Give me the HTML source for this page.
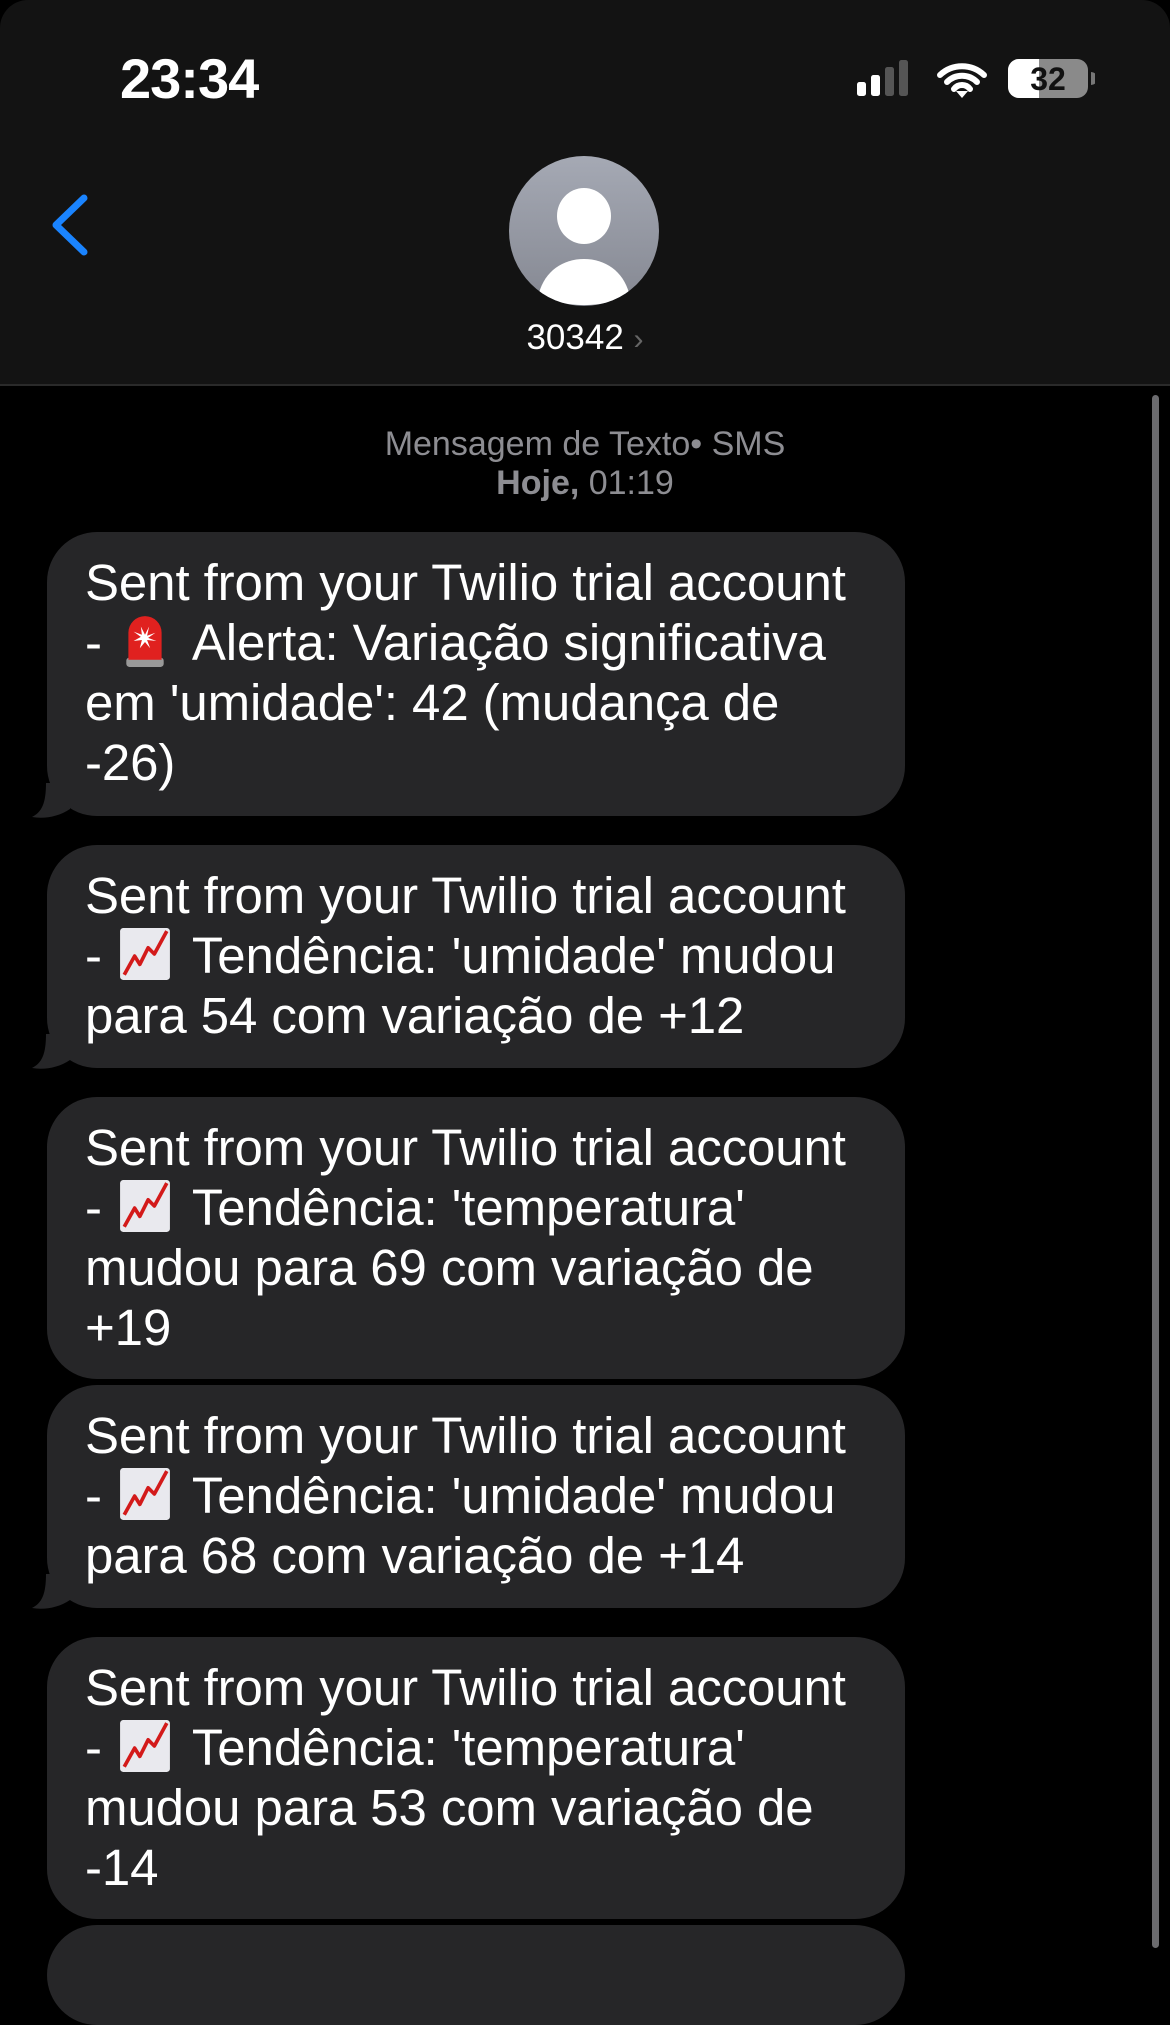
<!DOCTYPE html>
<html><head><meta charset="utf-8"><style>
*{margin:0;padding:0;box-sizing:border-box}
body{width:1170px;height:1948px;background:#000;overflow:hidden;font-family:"Liberation Sans",sans-serif;position:relative;color:#fff}
.hdr{position:absolute;left:0;top:0;width:1170px;height:386px;background:#131313;border-bottom:2px solid #2a2a2a;border-radius:28px 28px 0 0}
.time{position:absolute;left:120px;top:46px;font-size:56px;font-weight:bold;letter-spacing:-1px}
.num{position:absolute;left:0;width:1170px;top:318px;text-align:center;font-size:35px}
.meta{position:absolute;left:0;width:1170px;text-align:center;color:#8d8d92;font-size:34px}
.b{position:absolute;left:47px;width:858px;background:#262628;border-radius:50px;padding:21px 0 0 38px;font-size:51px;line-height:60px;white-space:nowrap;letter-spacing:-0.1px}
.tail{position:absolute;left:30px;width:40px;height:36px}
.emo{display:inline-block;width:54px;height:54px;vertical-align:-8px;margin:0 20px 0 16px}
.sb{position:absolute;left:1152px;top:395px;width:7px;height:1553px;background:#6b6b6e;border-radius:4px}
</style></head><body>
<div class="hdr"></div>
<div class="time">23:34</div>
<svg style="position:absolute;left:855px;top:58px" width="240" height="42" viewBox="0 0 240 42">
<rect x="2" y="24" width="9" height="14" rx="2.5" fill="#fff"/>
<rect x="16" y="17" width="9" height="21" rx="2.5" fill="#fff"/>
<rect x="30" y="9" width="9" height="29" rx="2.5" fill="#555"/>
<rect x="44" y="2" width="9" height="36" rx="2.5" fill="#555"/>
<path d="M85 17a32 32 0 0 1 44 0M92 24a21 21 0 0 1 30 0M99 31a10 10 0 0 1 16 0" stroke="#fff" stroke-width="6" fill="none" stroke-linecap="round"/>
<path d="M101 33l6 7 6-7z" fill="#fff"/>
<rect x="153" y="1" width="80" height="39" rx="11" fill="#8a8a8a"/>
<path d="M164 1h20v39h-20a11 11 0 0 1-11-11v-17a11 11 0 0 1 11-11z" fill="#fff"/>
<text x="193" y="32" text-anchor="middle" font-family="Liberation Sans" font-weight="bold" font-size="32" fill="#111">32</text>
<path d="M236 14a6 6 0 0 1 0 13z" fill="#777"/>
</svg>
<svg style="position:absolute;left:48px;top:193px" width="44" height="64" viewBox="0 0 44 64"><path d="M36 5L8 32l28 27" stroke="#1a84ff" stroke-width="7" fill="none" stroke-linecap="round" stroke-linejoin="round"/></svg>
<svg style="position:absolute;left:509px;top:156px" width="150" height="150" viewBox="0 0 150 150">
<defs><linearGradient id="g" x1="0" y1="0" x2="0" y2="1"><stop offset="0" stop-color="#a5a9b4"/><stop offset="1" stop-color="#858892"/></linearGradient><clipPath id="c"><circle cx="75" cy="75" r="75"/></clipPath></defs>
<circle cx="75" cy="75" r="75" fill="url(#g)"/>
<ellipse cx="75" cy="60" rx="27" ry="28" fill="#fff"/>
<path d="M30 137c6-22 24-34 45-34s39 12 45 34c-12 9-28 12-45 12s-33-3-45-12z" fill="#fff" clip-path="url(#c)"/>
</svg>
<div class="num">30342 <span style="color:#666;font-size:30px">&#x203A;</span></div>
<div class="meta" style="top:425px">Mensagem de Texto• SMS</div>
<div class="meta" style="top:464px"><b>Hoje,</b> 01:19</div>

<svg width="0" height="0" style="position:absolute"><defs>
<symbol id="chart" viewBox="0 0 52 52"><rect x="2" y="1" width="48" height="50" rx="3" fill="#e9e9ee"/><path d="M6 46l10-18 5 8 8-16 6 6 12-22" stroke="#d31a1a" stroke-width="3.5" fill="none" stroke-linejoin="round"/></symbol>
<symbol id="siren" viewBox="0 0 52 52"><rect x="8" y="42" width="36" height="9" rx="3" fill="#999"/><path d="M10 44V18a16 16 0 0 1 32 0v26z" fill="#e0211f"/><path d="M22 12l4 8 4-8-2 9 8-3-7 5 8 3-9-1 3 8-5-6-5 6 2-8-8 1 7-4-7-5 8 3z" fill="#fff"/></symbol>
<symbol id="tl" viewBox="0 0 40 36"><path d="M40 0v26c-12 8-26 10-38 8 10-5 14-14 14-34z" fill="#262628"/></symbol>
</defs></svg>

<div class="b" style="top:532px;height:284px">Sent from your Twilio trial account<br>-<svg class="emo"><use href="#siren"/></svg>Alerta: Variação significativa<br>em 'umidade': 42 (mudança de<br>-26)</div>
<svg class="tail" style="top:783px" viewBox="0 0 40 36"><use href="#tl"/></svg>

<div class="b" style="top:845px;height:223px">Sent from your Twilio trial account<br>-<svg class="emo"><use href="#chart"/></svg>Tendência: 'umidade' mudou<br>para 54 com variação de +12</div>
<svg class="tail" style="top:1034px" viewBox="0 0 40 36"><use href="#tl"/></svg>

<div class="b" style="top:1097px;height:282px">Sent from your Twilio trial account<br>-<svg class="emo"><use href="#chart"/></svg>Tendência: 'temperatura'<br>mudou para 69 com variação de<br>+19</div>

<div class="b" style="top:1385px;height:223px">Sent from your Twilio trial account<br>-<svg class="emo"><use href="#chart"/></svg>Tendência: 'umidade' mudou<br>para 68 com variação de +14</div>
<svg class="tail" style="top:1574px" viewBox="0 0 40 36"><use href="#tl"/></svg>

<div class="b" style="top:1637px;height:282px">Sent from your Twilio trial account<br>-<svg class="emo"><use href="#chart"/></svg>Tendência: 'temperatura'<br>mudou para 53 com variação de<br>-14</div>

<div class="b" style="top:1925px;height:100px"></div>
<div class="sb"></div>
</body></html>
